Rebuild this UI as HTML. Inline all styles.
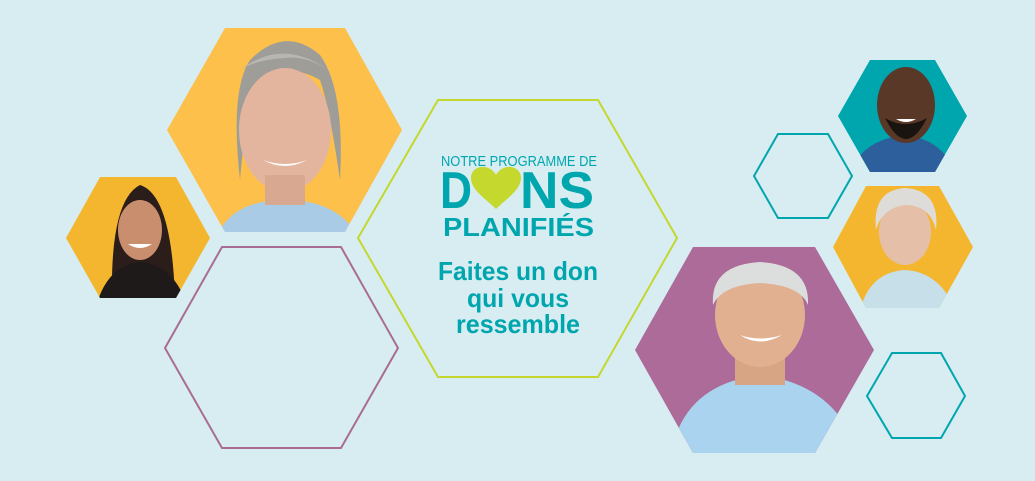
<!DOCTYPE html>
<html><head><meta charset="utf-8"><style>
html,body{margin:0;padding:0;background:#d8edf2;width:1035px;height:481px;overflow:hidden}
svg{display:block}
</style></head><body>
<svg width="1035" height="481" viewBox="0 0 1035 481" xmlns="http://www.w3.org/2000/svg">
<defs>
<clipPath id="c1"><polygon points="167,130 225,28 345,28 402,130 345,232 225,232"/></clipPath>
<clipPath id="c2"><polygon points="66,238 100,177 176,177 210,238 176,298 100,298"/></clipPath>
<clipPath id="c5"><polygon points="635,350 693,247 815,247 874,350 815,453 693,453"/></clipPath>
<clipPath id="c6"><polygon points="838,116 870,60 935,60 967,116 935,172 870,172"/></clipPath>
<clipPath id="c8"><polygon points="833,247 866,186 939,186 973,247 939,308 866,308"/></clipPath>
</defs>
<rect width="1035" height="481" fill="#d8edf2"/>

<polygon points="165,348 222,247 341,247 398,348 341,448 222,448" fill="none" stroke="#a96c93" stroke-width="2"/>
<polygon points="358,238 438,100 598,100 677,238 598,377 438,377" fill="none" stroke="#c4d72e" stroke-width="2"/>
<polygon points="754,176 778,134 828,134 852,176 828,218 778,218" fill="none" stroke="#00a6ae" stroke-width="2"/>
<polygon points="867,396 892,353 941,353 965,396 941,438 892,438" fill="none" stroke="#00a6ae" stroke-width="2"/>

<g clip-path="url(#c1)">
<rect x="160" y="20" width="250" height="220" fill="#fcc04b"/>
<path d="M215,240 Q230,200 285,200 Q340,200 360,240Z" fill="#a9cbe6"/>
<path d="M240,180 Q230,90 250,60 Q285,25 320,55 Q345,90 340,180 Q330,110 320,80 Q285,60 255,85 Q245,120 240,180Z" fill="#9f9d98"/>
<ellipse cx="285" cy="130" rx="46" ry="62" fill="#e3b59f"/>
<rect x="265" y="175" width="40" height="30" fill="#d8a891"/>
<path d="M263,160 Q285,172 307,160 Q285,168 263,160Z" fill="#fff"/>
<path d="M240,70 Q285,35 335,75 Q310,55 285,58 Q255,60 240,70Z" fill="#b9b6b0"/>
</g>

<g clip-path="url(#c2)">
<rect x="60" y="170" width="160" height="135" fill="#f4b62e"/>
<path d="M112,300 Q110,200 140,185 Q172,195 175,300Z" fill="#2b1d1a"/>
<path d="M98,300 Q110,265 140,262 Q172,265 185,300Z" fill="#1e1a1a"/>
<ellipse cx="140" cy="230" rx="22" ry="30" fill="#c98e6e"/>
<path d="M128,244 Q140,252 152,244Z" fill="#fff"/>
</g>

<g clip-path="url(#c5)">
<rect x="630" y="240" width="250" height="220" fill="#ad6b99"/>
<path d="M670,460 Q680,385 760,375 Q840,385 860,460Z" fill="#a9d3ef"/>
<rect x="735" y="335" width="50" height="50" fill="#d7a584"/>
<ellipse cx="760" cy="315" rx="45" ry="52" fill="#e0b090"/>
<path d="M713,305 Q710,265 760,262 Q810,265 808,305 Q800,285 760,283 Q722,285 713,305Z" fill="#dcdedd"/>
<path d="M740,335 Q760,348 782,335 Q760,342 740,335Z" fill="#fff"/>
</g>

<g clip-path="url(#c6)">
<rect x="830" y="55" width="145" height="125" fill="#00a6ae"/>
<path d="M850,175 Q860,140 905,135 Q945,140 955,175Z" fill="#2c5f9c"/>
<ellipse cx="906" cy="105" rx="29" ry="38" fill="#5a3828"/>
<path d="M885,118 Q906,160 927,118 Q906,130 885,118Z" fill="#1a1411"/>
<path d="M896,119 Q906,125 916,119Z" fill="#fff"/>
</g>

<g clip-path="url(#c8)">
<rect x="825" y="180" width="155" height="135" fill="#f4b62e"/>
<path d="M860,310 Q870,272 905,270 Q940,272 955,310Z" fill="#c6dfe8"/>
<ellipse cx="905" cy="232" rx="26" ry="33" fill="#e6bfa9"/>
<path d="M876,230 Q872,190 905,188 Q940,190 936,230 Q930,205 905,205 Q882,208 876,230Z" fill="#dedcd9"/>
</g>

<g font-family="Liberation Sans, sans-serif" fill="#00a6ae">
<text x="441" y="166" font-size="15" textLength="156" lengthAdjust="spacingAndGlyphs">NOTRE PROGRAMME DE</text>
<text x="440" y="208" font-weight="bold" font-size="52" textLength="32" lengthAdjust="spacingAndGlyphs">D</text>
<text x="520" y="208" font-weight="bold" font-size="52" textLength="74" lengthAdjust="spacingAndGlyphs">NS</text>
<text x="443" y="236" font-weight="bold" font-size="26" textLength="151" lengthAdjust="spacingAndGlyphs">PLANIFIÉS</text>
</g>
<path d="M496,209 C486,199 471,190 471,178 C471,170 478,166 485,167 C490,168 494,171 496,175 C498,171 502,168 507,167 C514,166 521,170 521,178 C521,190 506,199 496,209Z" fill="#c4d82e"/>
<g font-family="Liberation Sans, sans-serif" font-size="26" fill="#00a6ae" text-anchor="middle" font-weight="bold">
<text x="518" y="280" textLength="160" lengthAdjust="spacingAndGlyphs">Faites un don</text>
<text x="518" y="307" textLength="102" lengthAdjust="spacingAndGlyphs">qui vous</text>
<text x="518" y="333" textLength="124" lengthAdjust="spacingAndGlyphs">ressemble</text>
</g>
</svg>
</body></html>
